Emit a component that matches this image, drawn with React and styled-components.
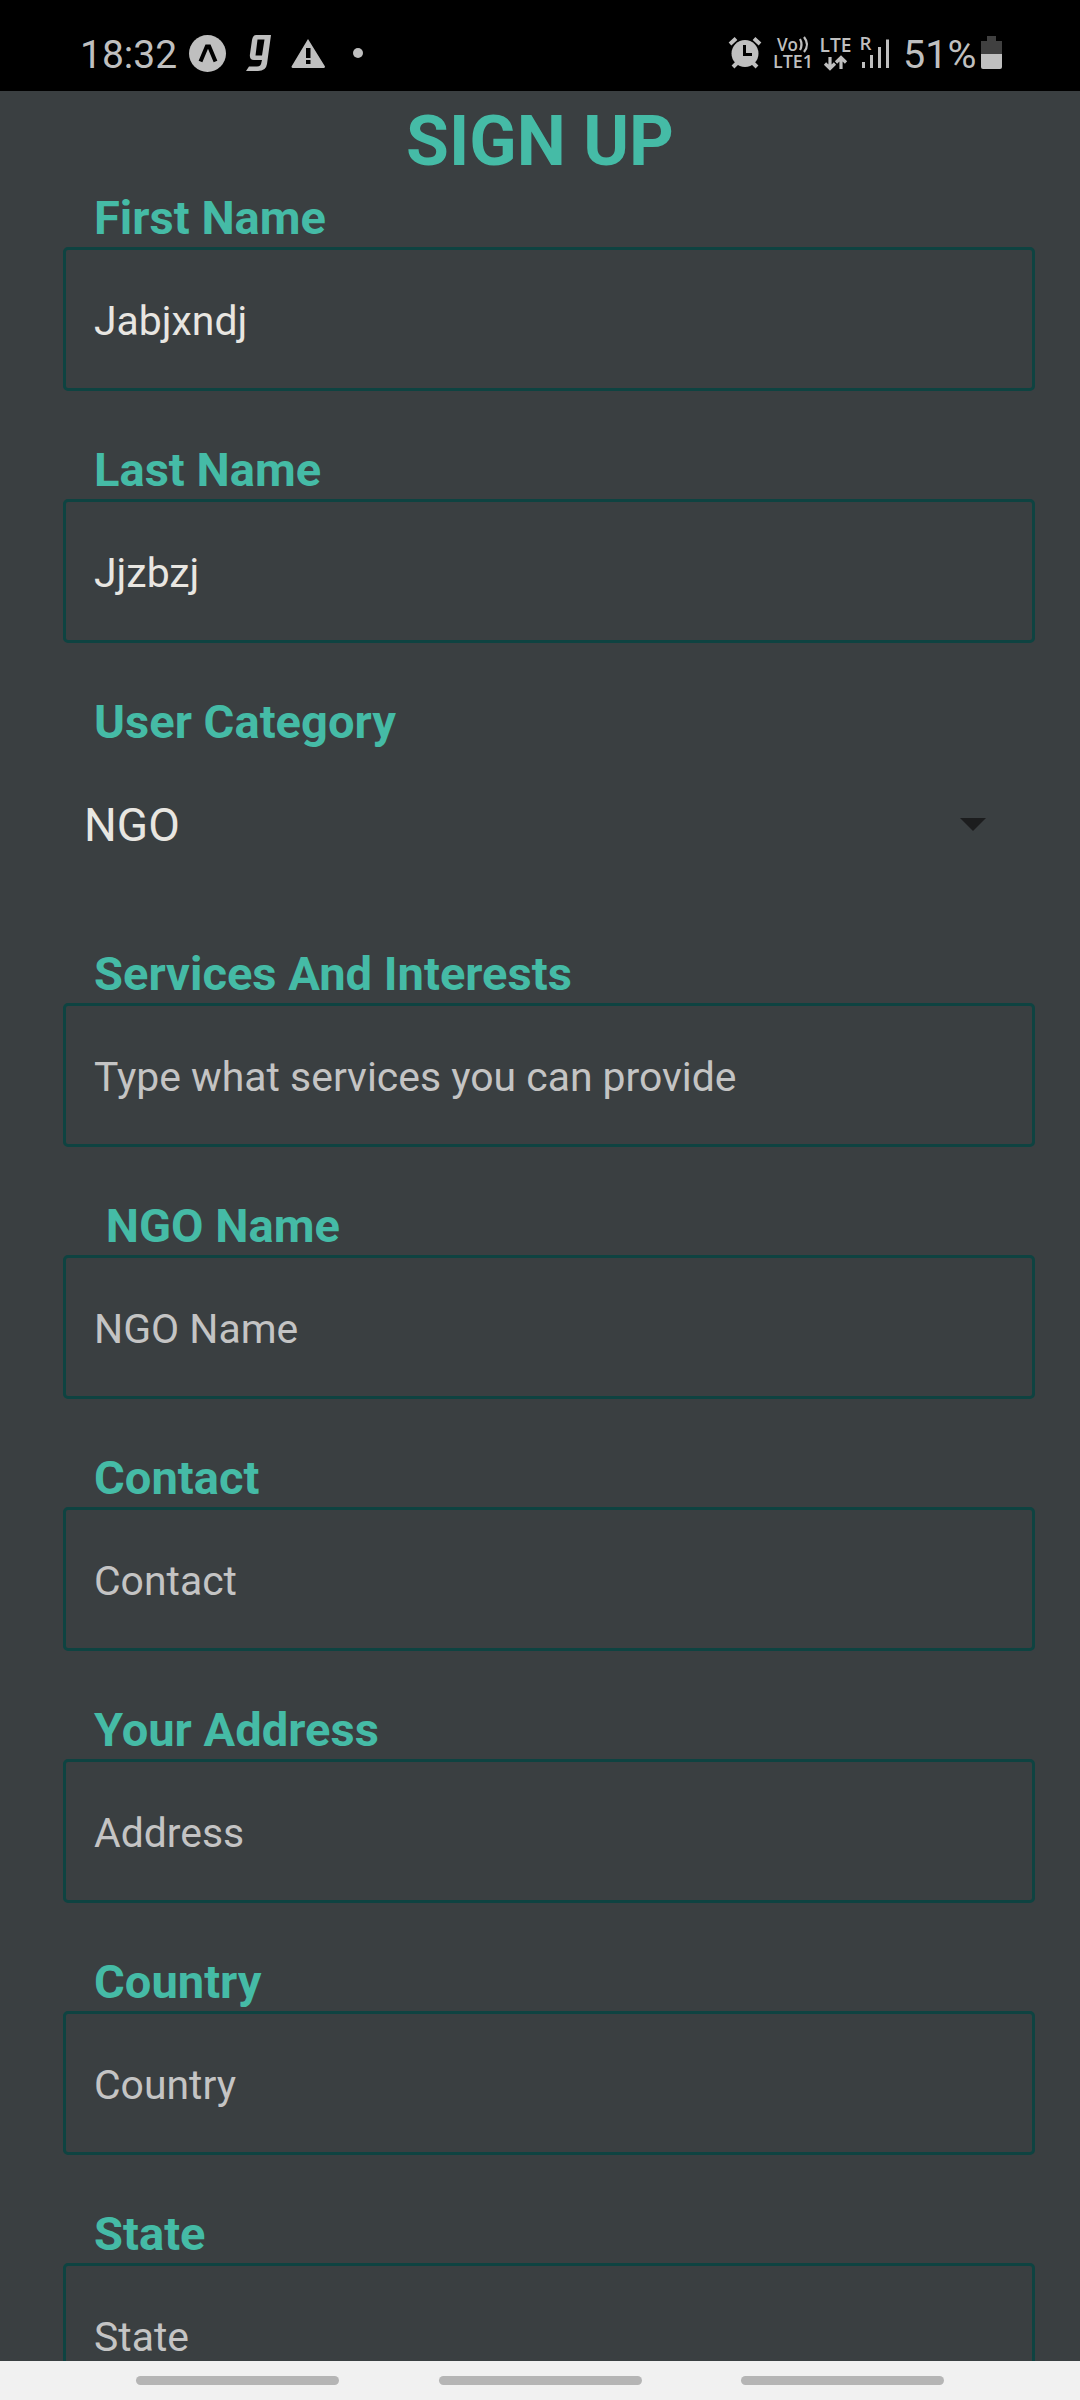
import React from "react";
import styled, { createGlobalStyle } from "styled-components";

const GlobalStyle = createGlobalStyle`
  * { box-sizing: border-box; }
  body { margin: 0; background: #3a3f41; font-family: Roboto, sans-serif; }
`;

const Screen = styled.div`
  width: 1080px;
  height: 2400px;
  display: flex;
  flex-direction: column;
  overflow: hidden;
  background: #3a3f41;
`;

const StatusBar = styled.header`
  flex: none;
  height: 91px;
  padding: 30px 77px 14px 80px;
  display: flex;
  justify-content: space-between;
  align-items: flex-start;
  background: #000;
  color: #bfbfbf;
`;

const StatusGroup = styled.div`
  display: flex;
  align-items: flex-start;
`;

const StatusText = styled.span`
  padding-top: 1px;
  font-size: ${(p) => p.$size}px;
  line-height: 48px;
  width: ${(p) => p.$width}px;
  white-space: nowrap;
`;

const StatusIcon = styled.svg`
  display: block;
  flex: none;
  width: ${(p) => p.$w}px;
  height: 47px;
  fill: #bfbfbf;
  font-family: "Open Sans", sans-serif;
  font-weight: 600;
`;

const Form = styled.main`
  flex: 1;
  min-height: 0;
  overflow: hidden;
  padding: 0 45px 0 63px;
`;

const Title = styled.h1`
  margin: 0 -45px 0 -63px;
  height: 98px;
  padding-top: 9px;
  font-size: 69.6px;
  line-height: 82px;
  font-weight: 700;
  text-align: center;
  color: #45bba6;
`;

const Field = styled.div`
  height: 252px;
`;

const Label = styled.div`
  height: 58px;
  padding-left: 31px;
  font-size: 47.1px;
  line-height: 58px;
  font-weight: 700;
  white-space: pre;
  color: #45bba6;
`;

const Box = styled.div`
  height: 144px;
  width: 972px;
  padding: 3px 28px 0;
  display: flex;
  align-items: center;
  border: 3px solid #0e4341;
  border-radius: 5px;
  font-size: 40.9px;
  color: ${(p) => (p.$filled ? "#e8e6e1" : "#c4c4c4")};
`;

const Picker = styled.div`
  height: 144px;
  padding: 3px 49px 0 21px;
  display: flex;
  align-items: center;
  justify-content: space-between;
  font-size: 46px;
  color: #e8e6e1;
`;

const Caret = styled.svg`
  width: 26px;
  height: 13px;
  margin-top: -1px;
  fill: #1c1d1e;
`;

const NavBar = styled.footer`
  flex: none;
  height: 39px;
  padding: 15px 136px 0;
  display: flex;
  justify-content: space-between;
  background: #f1f1f1;
`;

const Pill = styled.span`
  width: 203px;
  height: 9px;
  border-radius: 5px;
  background: #b5b5b5;
`;

const fields = [
  { label: "First Name", value: "Jabjxndj" },
  { label: "Last Name", value: "Jjzbzj" },
  { label: "User Category", picker: "NGO" },
  { label: "Services And Interests", hint: "Type what services you can provide" },
  { label: " NGO Name", hint: "NGO Name" },
  { label: "Contact", hint: "Contact" },
  { label: "Your Address", hint: "Address" },
  { label: "Country", hint: "Country" },
  { label: "State", hint: "State" },
];

function FormField({ label, value, hint, picker }) {
  return (
    <Field>
      <Label>{label}</Label>
      {picker ? (
        <Picker>
          <span>{picker}</span>
          <Caret viewBox="0 0 26 13"><path d="M0 0h26L13 13z" /></Caret>
        </Picker>
      ) : (
        <Box $filled={!!value}>{value || hint}</Box>
      )}
    </Field>
  );
}

export default function App() {
  return (
    <Screen>
      <GlobalStyle />
      <StatusBar>
        <StatusGroup>
          <StatusText $width={109} $size={39}>18:32</StatusText>
          <StatusIcon $w={181} viewBox="189 30 181 47">
            <circle cx="207.5" cy="53.5" r="18.5" />
            <path d="M200.500 61.500L206.800 46.500H209.200L215.500 61.500" fill="none" stroke="#000" strokeWidth="4" />
            <path fillRule="evenodd" d="M256 35H271L267 64Q266 71 258 71H246L249 66.500H257Q261 66.500 261.500 62L262 60H254Q249 60 250 54L252 40Q253 35 256 35ZM257.500 39.500L255.500 55.500H262L264.500 39.500Z" />
            <path fillRule="evenodd" d="M308 39L325 66.500Q325 68 323.500 68H293Q291.500 68 291.500 66.500ZM306 48V58H310.500V48ZM306 60V64H310.500V60Z" />
            <circle cx="358" cy="53" r="5" />
          </StatusIcon>
        </StatusGroup>
        <StatusGroup>
          <StatusIcon $w={176} viewBox="727 30 176 47">
            <circle cx="745" cy="53.500" r="13.500" />
            <path d="M730 44L736 38.500M760 44L754 38.500M733 67L738 62M757 67L752 62" fill="none" stroke="#bfbfbf" strokeWidth="4" />
            <path d="M744.500 45V54.500H752" fill="none" stroke="#000" strokeWidth="3" />
            <text x="777" y="50.500" fontSize="18" textLength="21" lengthAdjust="spacingAndGlyphs">Vo</text>
            <path d="M800 39Q803 44.500 800 50M804 37Q810 44.500 804 52" fill="none" stroke="#bfbfbf" strokeWidth="2.200" />
            <text x="773" y="68" fontSize="18" textLength="40" lengthAdjust="spacingAndGlyphs">LTE1</text>
            <text x="819.500" y="51.500" fontSize="19" textLength="32" lengthAdjust="spacingAndGlyphs">LTE</text>
            <path d="M830 57V68M825 63.500L830 68.500L835 63.500M841 69V58M836 62.500L841 57.500L846 62.500" fill="none" stroke="#bfbfbf" strokeWidth="3.200" />
            <text x="859.500" y="50" fontSize="18" textLength="12" lengthAdjust="spacingAndGlyphs">R</text>
            <path d="M863.500 62V68M871.500 55V68M879.500 47V68M887.500 39.500V68" fill="none" stroke="#bfbfbf" strokeWidth="3" />
          </StatusIcon>
          <StatusText $width={78} $size={39.5}>51%</StatusText>
          <StatusIcon $w={22} viewBox="981 30 22 47">
            <path d="M987 36h9v5h6v13h-21V41h6z" fill="#404040" />
            <path d="M981 54h21v13q0 2-2 2h-17q-2 0-2-2z" />
          </StatusIcon>
        </StatusGroup>
      </StatusBar>
      <Form>
        <Title>SIGN UP</Title>
        {fields.map((f) => (
          <FormField key={f.label} {...f} />
        ))}
      </Form>
      <NavBar>
        <Pill />
        <Pill />
        <Pill />
      </NavBar>
    </Screen>
  );
}
